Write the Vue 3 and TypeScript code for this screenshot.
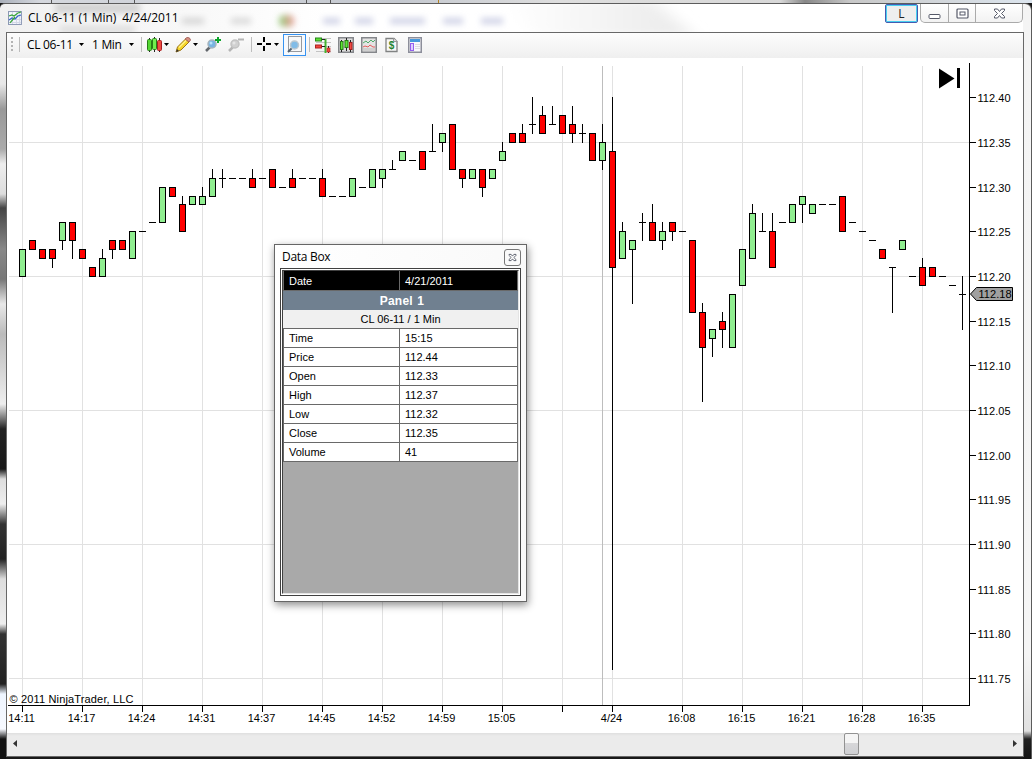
<script setup lang="ts">
interface Candle {
  x: number
  top: number
  bottom: number
  high: number
  low: number
  fill: string
  flat: boolean
}

// Each bar: kind (g = up, r = down, d = unchanged), body top, body bottom, high, low.
// Values are ticks of 0.01 relative to 112.20.
const bars = `g3,0 r4,3 r3,2 r3,2,3,1 g6,4,6,3 r6,4,6,2 r3,2 r1,0 g2,0,3,0 r4,3,4,2
r4,3 g5,2 d5,5 d6,6 g10,6 r10,9 r8,5,9,5 g9,8 g9,8,10,8 g11,9,12,9
d11,11,12,10 d11,11 d11,11 r11,10,12,10 d11,11 r12,10 d10,10 r11,10,12,10 d11,11 d11,11
r11,9,12,9 d9,9 d9,9 g11,9 d10,10 g12,10 g12,11,12,10 d12,12,13,12 g14,13 d13,13
r14,12 d14,14,17,14 g16,15,16,14 r17,12 r12,11,12,10 g12,11 r12,10,12,9 g12,11 g14,13,15,13 r16,15
r16,15,17,15 d17,17,20,16 r18,16,19,16 d17,17,19,17 r18,16 r17,16,19,15 d16,16,17,15 r16,13 g15,13,17,12 r14,1,20,-44
g5,2,6,2 g4,3,4,-3 d6,6,7,4 r6,4,8,4 g5,4,6,3 r6,5,6,4 d5,5 r4,-4 r-4,-8,-3,-14 g-6,-7,-6,-9
r-5,-6,-4,-8 g-2,-8 g3,-1 g7,2,8,2 d5,5,7,5 r5,1,7,1 d6,6 g8,6 g9,8,9,6 g8,7
d8,8 d8,8 r9,5 d6,6 d5,5 d4,4 r3,2 d1,1,1,-4 g4,3 d0,0
r1,-1,2,-1 r1,0 d0,0 d-1,-1 d-2,-2,0,-6`

const priceY = (ticks: number): number => Math.round(275.9 - ticks * 8.933)

const candles: Candle[] = bars.split(/\s+/).map((bar, i) => {
  const v = bar.slice(1).split(',').map(Number)
  return {
    x: 22 + i * 10,
    top: priceY(v[0]),
    bottom: priceY(v[1]),
    high: priceY(v[2] ?? v[0]),
    low: priceY(v[3] ?? v[1]),
    fill: bar[0] === 'g' ? '#90ee90' : '#ff0000',
    flat: bar[0] === 'd',
  }
})

const times = [
  { x: 22, t: '14:11' }, { x: 82, t: '14:17' }, { x: 142, t: '14:24' }, { x: 202, t: '14:31' },
  { x: 262, t: '14:37' }, { x: 322, t: '14:45' }, { x: 382, t: '14:52' }, { x: 442, t: '14:59' },
  { x: 502, t: '15:05' }, { x: 562, t: '' }, { x: 612, t: '4/24' }, { x: 682, t: '16:08' },
  { x: 742, t: '16:15' }, { x: 802, t: '16:21' }, { x: 862, t: '16:28' }, { x: 922, t: '16:35' },
]
const prices = Array.from({ length: 14 }, (_, i) => ({
  label: (112.4 - i * 0.05).toFixed(2),
  y: priceY(20 - i * 5),
}))
const gridRows = [15, 0, -15, -30, -45].map(priceY)

const rows = [
  ['Time', '15:15'], ['Price', '112.44'], ['Open', '112.33'], ['High', '112.37'],
  ['Low', '112.32'], ['Close', '112.35'], ['Volume', '41'],
]
</script>

<template>
  <div class="desktop">
    <div class="backdrop"><i class="tab t1"></i><i class="tab t2"></i><i class="tab t3"></i></div>
    <div class="window">
      <header class="titlebar">
        <svg class="glass" width="1024" height="28" viewBox="6 4 1024 28">
          <defs>
            <filter id="soft" x="-50%" y="-100%" width="200%" height="300%"><feGaussianBlur stdDeviation="3" /></filter>
            <filter id="wide" x="-50%" y="-100%" width="200%" height="300%"><feGaussianBlur stdDeviation="10 3" /></filter>
            <linearGradient id="rg"><stop offset="0" stop-color="#8fd07c" /><stop offset="1" stop-color="#f09a9a" /></linearGradient>
            <linearGradient id="sheen"><stop offset="0" stop-color="#fff" /><stop offset="1" stop-color="#eaeaea" /></linearGradient>
          </defs>
          <rect x="55" y="3" width="85" height="10" fill="#d2d2d2" filter="url(#soft)" />
          <rect x="60" y="26" width="75" height="7" fill="#ddd" filter="url(#soft)" />
          <path d="M505 2H655L692 34H535Z" fill="url(#sheen)" filter="url(#wide)" />
          <g filter="url(#soft)">
            <rect x="182" y="18" width="22" height="6" fill="#d4d4d4" />
            <rect x="231" y="18" width="20" height="6" fill="#d8d8d8" />
            <rect x="279" y="15" width="15" height="12" rx="5" fill="url(#rg)" />
            <g fill="#cfd1e6">
              <rect x="323" y="18" width="17" height="6" /><rect x="355" y="18" width="18" height="6" />
              <rect x="390" y="18" width="35" height="6" /><rect x="443" y="18" width="20" height="6" />
              <rect x="481" y="18" width="22" height="6" />
            </g>
          </g>
        </svg>
        <svg class="app-icon" width="14" height="14" viewBox="0 0 14 14">
          <rect x=".5" y=".5" width="13" height="13" fill="#f4f6fc" stroke="#8b98b4" />
          <path d="M4.500 1v12M8.500 1v12M1 4.500h12M1 8.500h12M11.500 1v12M1 11.500h12" stroke="#d3d7e6" />
          <path d="M1 9L4 7 7 8 10 5 13 4" fill="none" stroke="#3465c8" stroke-width="1.200" />
          <path d="M1 5L4 4 6 5 10 2 13 1M2 12L7 6" fill="none" stroke="#36a637" stroke-width="1.200" />
        </svg>
        <span class="title">CL 06-11 (1 Min)&nbsp; 4/24/2011</span>
        <button class="link-btn">L</button>
        <div class="controls">
          <button class="ctl"><svg width="13" height="13" viewBox="0 0 13 13"><rect x="1" y="7.500" width="11" height="4" rx="1" fill="#fff" stroke="#555968" /></svg></button>
          <button class="ctl"><svg width="13" height="13" viewBox="0 0 13 13"><rect x="1" y="2" width="11" height="9" rx="1" fill="#fff" stroke="#555968" stroke-width="1.200" /><rect x="4" y="5" width="5" height="3" fill="#fff" stroke="#555968" /></svg></button>
          <button class="ctl last"><svg width="13" height="13" viewBox="0 0 13 13"><path d="M1.500 2h3l2 2.500 2-2.500h3v1.500L8.500 6.500l3 3V11h-3l-2-2.500-2 2.500h-3V9.500l3-3-3-3z" fill="#fff" stroke="#555968" /></svg></button>
        </div>
      </header>

      <main class="client">
        <nav class="toolbar">
          <span class="grip"></span>
          <span class="sep s1"></span>
          <span class="tb-text sym">CL 06-11</span><i class="caret c1"></i>
          <span class="tb-text per">1 Min</span><i class="caret c2"></i>
          <span class="sep s2"></span>
          <svg class="ico i1" width="16" height="18" viewBox="0 0 16 18">
            <path d="M2.500 2v14M7.500 1v15M12.500 2v14" stroke="#222" />
            <rect x=".5" y="3.500" width="4" height="11" rx="1" fill="#54d833" stroke="#287e18" />
            <rect x="5.500" y="2.500" width="4" height="11" rx="1" fill="#72ee4e" stroke="#287e18" />
            <rect x="10.500" y="4.500" width="4" height="10" rx="1" fill="#ef4c43" stroke="#a91e20" />
          </svg><i class="caret c3"></i>
          <svg class="ico i2" width="16" height="16" viewBox="0 0 16 16">
            <path d="M1 15L2.500 10 10.500 2 14 5 6 13z" fill="#f5d429" stroke="#9b741a" />
            <path d="M10 2l2-1.500Q15 0 15.500 3L14 5z" fill="#d99183" stroke="#a7665e" />
            <path d="M4 10.500l7-7" stroke="#fff38c" stroke-width="1.500" /><path d="M1 15l1-3 2 2z" fill="#333" />
          </svg><i class="caret c4"></i>
          <svg class="ico i3" width="17" height="17" viewBox="0 0 17 17">
            <path d="M1 15l4-4" stroke="#62666b" stroke-width="2.500" /><circle cx="7" cy="8" r="4" fill="#79b4e1" stroke="#a6b4bd" stroke-width="1.500" /><circle cx="6" cy="7" r="1.500" fill="#b9e1fa" />
            <path d="M13 1v6M10 4h6" stroke="#0ca52a" stroke-width="2" />
          </svg>
          <svg class="ico i4" width="17" height="17" viewBox="0 0 17 17">
            <path d="M1 15l4-4" stroke="#b5b5b5" stroke-width="2.500" /><circle cx="7" cy="8" r="4" fill="#d0d0d0" stroke="#c2c2c2" stroke-width="1.500" /><circle cx="6" cy="7" r="1.500" fill="#e5e5e5" /><path d="M10 3.500h6" stroke="#b5b5b5" stroke-width="2" />
          </svg>
          <span class="sep s3"></span>
          <svg class="ico i5" width="15" height="15" viewBox="0 0 15 15"><path d="M7 0v5M7 9v5M0 7h5M9 7h5" stroke="#000" stroke-width="2" /></svg><i class="caret c5"></i>
          <span class="selected">
            <svg width="16" height="17" viewBox="0 0 16 17"><rect x="1.500" y=".5" width="13" height="15" fill="#f8f8f8" stroke="#96999e" /><path d="M1 16l4-4" stroke="#4f6070" stroke-width="2" /><circle cx="7.500" cy="9" r="4" fill="#81bce7" stroke="#bcc8d0" stroke-width="1.500" /></svg>
          </span>
          <span class="sep s4"></span>
          <svg class="ico i6" width="16" height="16" viewBox="0 0 16 16">
            <path d="M6 1.500h10M1 5.500h15M6 9.500h10M1 14.500h15" stroke="#c3c3c3" />
            <path d="M10.500 2v14" stroke="#42b52f" stroke-width="2" /><path d="M13.500 9v7" stroke="#222" />
            <rect x=".5" y="1" width="6" height="3" fill="#5ddf34" stroke="#248918" /><path d="M7 2.500h3M7 9.500h3" stroke="#222" />
            <rect x=".5" y="8" width="6" height="3" fill="#f1473e" stroke="#ac2021" /><rect x="12" y="11" width="3" height="4" fill="#f1473e" stroke="#b72825" stroke-width=".7" />
          </svg>
          <svg class="ico i7" width="16" height="16" viewBox="0 0 16 16">
            <rect x=".75" y=".75" width="14.500" height="14.500" fill="#ddd" stroke="#85878b" stroke-width="1.500" /><path d="M1 5h14M1 10h14" stroke="#bbb" />
            <path d="M3.500 3v12M8.500 1v13M12.500 3v12" stroke="#222" />
            <rect x="2.500" y="4.500" width="2.500" height="8" fill="#5ee635" stroke="#277b17" /><rect x="7" y="3.500" width="3" height="7" fill="#5ee635" stroke="#277b17" /><rect x="11.500" y="5.500" width="2.500" height="7" fill="#f34a43" stroke="#a01e1f" />
          </svg>
          <svg class="ico i8" width="16" height="16" viewBox="0 0 16 16">
            <rect x=".75" y=".75" width="14.500" height="14.500" fill="#e4e4e4" stroke="#85878b" stroke-width="1.500" /><path d="M2 12.500h12" stroke="#cfcfcf" stroke-width="3" />
            <path d="M2 6l3-2 2 2 3-3 2 2 2-2" fill="none" stroke="#51ab6b" /><path d="M2 10l2-1 3 1 2-2 3 2h2" fill="none" stroke="#e65c5c" />
          </svg>
          <svg class="ico i9" width="13" height="16" viewBox="0 0 13 16">
            <path d="M1 1.500h8l3 3v10H1z" fill="#f8f8f8" stroke="#808282" stroke-width="1.300" /><path d="M8.500 1.500v3h4" fill="#ddd" stroke="#999" />
            <text x="6.500" y="12" text-anchor="middle" class="dollar">$</text>
          </svg>
          <svg class="ico i10" width="14" height="16" viewBox="0 0 14 16">
            <rect x=".75" y=".75" width="12.500" height="14.500" fill="#f8f8fb" stroke="#8c8e9a" stroke-width="1.500" /><path d="M2 3.500h10" stroke="#4799dc" stroke-width="3" />
            <rect x="2.500" y="6.500" width="3" height="7" fill="#ddceff" stroke="#9360ee" /><path d="M7 7.500h5M7 9.500h5M7 11.500h5" stroke="#dcdce2" />
          </svg>
        </nav>

        <svg class="chart" width="1016" height="675" viewBox="7 58 1016 675">
          <g shape-rendering="crispEdges">
            <rect v-for="y in gridRows" :key="'h' + y" x="9" :y="y" width="960" height="1" fill="#e1e1e1" />
            <rect v-for="t in times" :key="'v' + t.x" :x="t.x" y="66" width="1" height="639" fill="#e1e1e1" />
            <rect x="602" y="66" width="1" height="639" fill="#bdbdbd" />
            <template v-for="c in candles" :key="c.x">
              <rect v-if="c.low > c.high" :x="c.x" :y="c.high" width="1" :height="c.low - c.high + 1" fill="#000" />
              <rect v-if="c.flat" :x="c.x - 3" :y="c.top" width="7" height="1" fill="#000" />
              <rect v-else :x="c.x - 2.5" :y="c.top + 0.5" width="6" :height="c.bottom - c.top" :fill="c.fill" stroke="#000" />
            </template>
            <rect x="969" y="63" width="1" height="643" />
            <rect x="8" y="705" width="962" height="1" />
            <rect v-for="t in times" :key="'t' + t.x" :x="t.x" y="706" width="1" height="6" />
            <rect v-for="p in prices" :key="'p' + p.y" x="970" :y="p.y" width="6" height="1" />
            <rect x="957" y="68" width="3" height="20" />
          </g>
          <path d="M939 68.500L954.500 78.500 939 88.500z" />
          <text v-for="t in times" :key="'l' + t.x" :x="t.x - 0.5" y="722" text-anchor="middle">{{ t.t }}</text>
          <text v-for="p in prices" :key="p.label" x="977.500" :y="p.y + 5" textLength="33">{{ p.label }}</text>
          <path d="M970.500 294L976.500 287.500H1012.500V300.500H976.500Z" fill="#a0a0a0" stroke="#000" />
          <text x="978.500" y="298" textLength="33">112.18</text>
          <text x="9.500" y="703" textLength="124">© 2011 NinjaTrader, LLC</text>
        </svg>

        <div class="scrollbar">
          <i class="arrow left"></i><i class="thumb"></i><i class="arrow right"></i>
        </div>
      </main>
    </div>

    <section class="databox">
      <div class="db-head">
        <span>Data Box</span>
        <button class="db-close"><svg width="9" height="9" viewBox="0 0 13 13"><path d="M1.500 2h3l2 2.500 2-2.500h3v1.500L8.500 6.500l3 3V11h-3l-2-2.500-2 2.500h-3V9.500l3-3-3-3z" fill="#fff" stroke="#444857" stroke-width="1.200" /></svg></button>
      </div>
      <div class="db-frame">
        <div class="db-inner">
          <div class="row date"><span>Date</span><span>4/21/2011</span></div>
          <div class="panel">Panel 1</div>
          <div class="series">CL 06-11 / 1 Min</div>
          <div v-for="r in rows" :key="r[0]" class="row"><span>{{ r[0] }}</span><span>{{ r[1] }}</span></div>
        </div>
      </div>
    </section>
  </div>
</template>

<style>
html, body { margin: 0; overflow: hidden; }
</style>

<style scoped>
* { box-sizing: border-box; }
.desktop {
  position: relative; width: 1032px; height: 759px; overflow: hidden;
  font-family: "Liberation Sans", Arial, sans-serif; font-size: 11px; color: #000; background: #161616;
}
.backdrop { height: 3px; display: flex; background: linear-gradient(90deg, #aab0ba, #d5d8de 40px, #c5c9d0 400px, #dedede 560px, #d8d8d8 780px, #888 805px, #c8c8c8 850px, #dce5ee); }
.tab { height: 3px; border-left: 1px solid #555; border-right: 1px solid #555; }
.t1 { margin-left: 51px; width: 58px; }
.t2 { margin-left: 25px; width: 173px; }
.t3 { margin-left: 23px; width: 109px; border-right-color: #b48220; }
.window {
  height: 756px; display: flex; flex-direction: column; padding: 0 8px 2px 6px;
  border-top: 1px solid #5c5c5c; border-right: 1px solid #5b5b5b; border-top-right-radius: 7px; border-top-left-radius: 5px;
  background:
    linear-gradient(180deg, #f2f2f2 0, #e8e8e8 80px, #999 105px, #aaa 145px, #eee 160px, #ddd 190px, #444 204px, #888 245px, #777 275px, #e8e8e8 300px, #bbb 330px, #eee 400px, #222 425px, #181818 465px, #ddd 475px, #eee 500px, #333 520px, #222 555px, #ddd 575px, #eee 620px, #333 630px, #222 680px, #eef5ff 690px, #f7f9ff 725px, #111 735px) left / 6px 100% no-repeat,
    linear-gradient(180deg, #f4f4f4 0, #f5f5f5 650px, #e0e0e0 727px, #222 735px, #111) right / 8px 100% no-repeat,
    #181818;
}
.titlebar { position: relative; height: 28px; flex: none; display: flex; align-items: flex-start; background: linear-gradient(90deg, #f1f1f1, #f8f8f8 180px, #fff 320px, #fff); }
.glass { position: absolute; left: 0; top: 0; z-index: 0; }
.app-icon { position: relative; margin: 7px 0 0 2px; }
.title { position: relative; margin-left: 6px; width: 160px; line-height: 27px; font-family: "Open Sans", "Noto Sans", sans-serif; font-size: 12px; letter-spacing: -.08px; white-space: nowrap; }
button { padding: 0; font: inherit; }
.link-btn { position: relative; margin-left: 698px; width: 33px; height: 19px; flex: none; border: 1px solid #445bb0; box-shadow: inset 0 0 0 1px #49cff1; border-radius: 2px; background: #eee; font-family: "Open Sans", sans-serif; font-size: 12px; line-height: 16px; color: #222; }
.controls { position: relative; margin-left: 2px; width: 103px; height: 19px; flex: none; display: flex; border: 1px solid #aaa; border-top: 0; border-radius: 0 0 5px 5px; background: linear-gradient(#fff, #f2f2f2); }
.ctl { width: 28px; flex: none; border: 0; border-right: 1px solid #aaa; background: transparent; display: flex; align-items: center; justify-content: center; }
.ctl + .ctl { width: 27px; }
.ctl.last { width: 46px; border-right: 0; }
.client { flex: none; width: 1018px; height: 725px; border: 1px solid #686868; display: flex; flex-direction: column; background: #fff; }
.toolbar { height: 25px; padding-bottom: 2px; flex: none; display: flex; align-items: center; background: linear-gradient(#fdfdfd, #efefef); }
.grip { width: 2px; height: 15px; margin-left: 4px; background: repeating-linear-gradient(#b4b4b4 0 2px, transparent 2px 4px); }
.sep { width: 1px; height: 15px; background: #bdbdbd; flex: none; }
.tb-text { font-family: "Open Sans", "Noto Sans", sans-serif; font-size: 12px; letter-spacing: -.3px; white-space: nowrap; }
.caret { flex: none; width: 5px; height: 3px; background: #000; clip-path: polygon(0 0, 100% 0, 50% 100%); }
.ico { flex: none; }
.s1 { margin-left: 6px; } .sym { margin-left: 7px; width: 52px; } .c1 { margin-left: 0; }
.per { margin-left: 8px; width: 37px; } .s2 { margin-left: 7px; }
.i1 { margin-left: 5px; } .c3 { margin-left: 1px; }
.i2 { margin-left: 6px; } .c4 { margin-left: 2px; }
.i3 { margin-left: 7px; } .i4 { margin-left: 6px; } .s3 { margin-left: 6px; }
.i5 { margin-left: 5px; } .c5 { margin-left: 2px; }
.selected { flex: none; margin-left: 4px; width: 23px; height: 22px; border: 1px solid #3592f1; display: flex; align-items: center; justify-content: center; background: #f6f9fd; }
.s4 { margin-left: 3px; } .i6 { margin-left: 5px; } .i7 { margin-left: 7px; } .i8 { margin-left: 7px; } .i9 { margin-left: 8px; } .i10 { margin-left: 10px; }
.dollar { font: bold 10px "Liberation Sans", sans-serif; fill: #25832f; }
.chart { flex: none; display: block; font-size: 11px; }
.scrollbar { height: 23px; padding-bottom: 2px; flex: none; display: flex; align-items: center; background: linear-gradient(#dfdfdf, #ebebeb 3px, #ebebeb); }
.arrow { width: 4px; height: 7px; background: #333; flex: none; }
.left { margin-left: 6px; clip-path: polygon(100% 0, 100% 100%, 0 50%); }
.right { margin-left: 154px; clip-path: polygon(0 0, 100% 50%, 0 100%); }
.thumb { margin-left: 827px; width: 15px; height: 22px; flex: none; border: 1px solid #929292; border-radius: 2px; background: linear-gradient(#f5f5f5 0 45%, #d7d7d9 46%, #cfd0d3); }
.databox { position: absolute; left: 274px; top: 244px; width: 253px; height: 358px; padding: 0 5px 5px; border: 1px solid #666; background: linear-gradient(100deg, #fff, #f8f8f8); box-shadow: 1px 3px 8px rgba(0, 0, 0, .45); display: flex; flex-direction: column; }
.db-head { height: 22px; flex: none; display: flex; justify-content: space-between; padding-left: 2px; line-height: 24px; font-family: "Open Sans", sans-serif; font-size: 12px; letter-spacing: -.3px; }
.db-close { margin-top: 4px; width: 17px; height: 17px; border: 1px solid #777; border-radius: 3px; background: #fafafa; display: flex; align-items: center; justify-content: center; }
.db-frame { height: 328px; flex: none; width: 241px; margin-top: 1px; padding: 1px; border: 1px solid #404040; background: #fff; }
.db-inner { height: 324px; border-left: 1px solid #404040; border-top: 1px solid #404040; border-right: 1px solid #e4e4e4; border-bottom: 1px solid #e4e4e4; background: #a9a9a9; }
.row { display: flex; width: 235px; height: 19px; line-height: 18px; background: #fff; border: 1px solid #696969; border-top: 0; }
.row span:first-child { width: 116px; padding-left: 5px; border-right: 1px solid #696969; }
.row span:last-child { padding-left: 5px; }
.row.date { height: 20px; line-height: 20px; background: #000; color: #fff; }
.panel { width: 235px; height: 19px; line-height: 20px; padding-left: 3px; text-align: center; background: #708090; color: #fff; font-weight: bold; font-size: 12px; letter-spacing: .2px; word-spacing: 1px; }
.series { width: 235px; height: 19px; line-height: 19px; text-align: center; background: #f0f0f0; border-bottom: 1px solid #696969; }
</style>
